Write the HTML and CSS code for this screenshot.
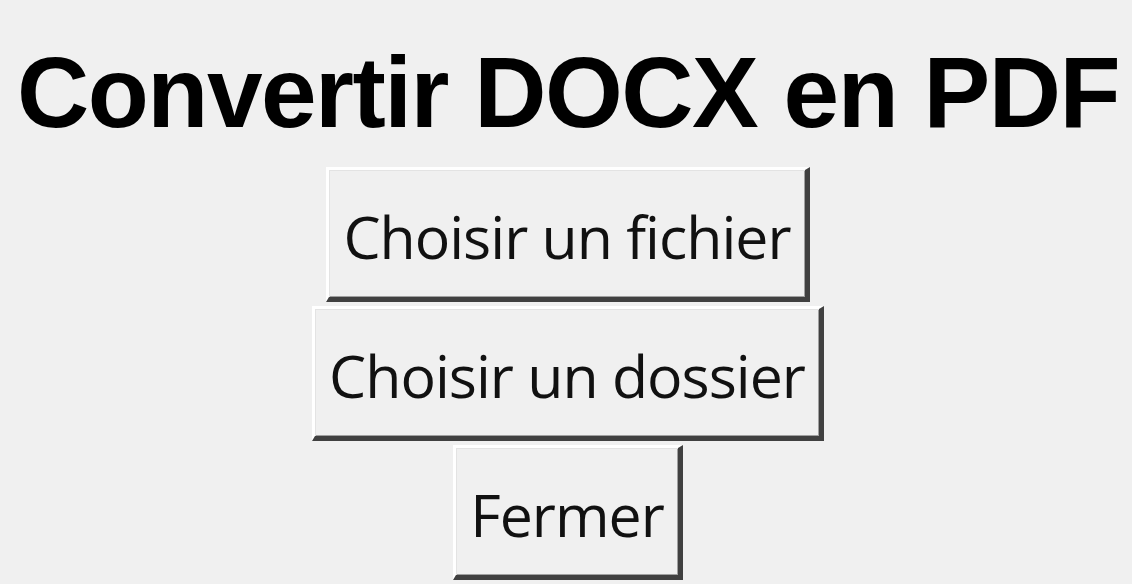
FILE: index.html
```html
<!DOCTYPE html>
<html lang="fr">
<head>
<meta charset="utf-8">
<title>Convertir DOCX en PDF</title>
<link rel="stylesheet" href="styles.css">
</head>
<body>
<main class="app">
  <h1 class="title">Convertir DOCX en PDF</h1>
  <div class="actions">
    <button class="btn btn-file">Choisir un fichier</button>
    <button class="btn btn-folder">Choisir un dossier</button>
    <button class="btn btn-close">Fermer</button>
  </div>
</main>
</body>
</html>
```
FILE: styles.css
```css
html, body {
  margin: 0;
  padding: 0;
  background: #f0f0f0;
  overflow: hidden;
}
.app {
  display: flex;
  flex-direction: column;
  align-items: center;
  padding-left: 4px;
}
.title {
  margin: 27px 0 0 0;
  font-family: "Liberation Sans", Arial, sans-serif;
  font-weight: 700;
  font-size: 100px;
  line-height: 130px;
  color: #000;
  letter-spacing: -1.5px;
  white-space: nowrap;
}
.actions {
  display: flex;
  flex-direction: column;
  align-items: center;
  gap: 4px;
  margin-top: 10px;
}
.btn {
  font-family: "Open Sans", "Noto Sans", sans-serif;
  font-size: 59px;
  line-height: 84px;
  letter-spacing: -1px;
  font-variant-ligatures: none;
  color: #111;
  background: #f0f0f0;
  border-style: solid;
  border-width: 3px 5px 5px 3px;
  border-color: #ffffff #404040 #404040 #ffffff;
  box-shadow: inset 1px 1px 0 #e3e3e3, inset -1px -1px 0 #a0a0a0;
  padding: 24px 14px 19px 14px;
  margin: 0;
  cursor: default;
}
```
